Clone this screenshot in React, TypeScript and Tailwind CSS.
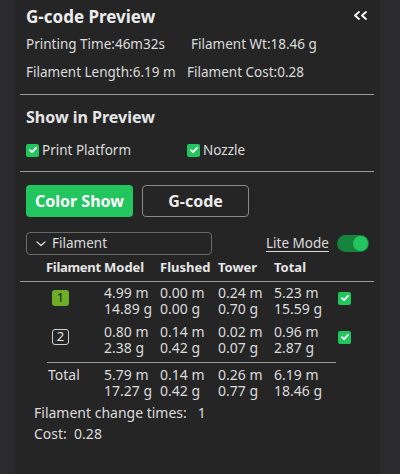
import React from 'react';

const font = { fontFamily: '"Noto Sans", "Open Sans", sans-serif' };

function Check({ className = '' }: { className?: string }) {
  return (
    <span className={`inline-flex w-[13px] h-[13px] rounded-[2px] bg-[#22c55e] items-center justify-center ${className}`}>
      <svg width="10" height="10" viewBox="0 0 10 10" fill="none">
        <path d="M2 5.2 L4.1 7.2 L8 2.8" stroke="white" strokeWidth="1.8" strokeLinecap="round" strokeLinejoin="round" />
      </svg>
    </span>
  );
}

function Cell({ lines }: { lines: string[] }) {
  return (
    <div className="flex flex-col">
      {lines.map((l) => (
        <span key={l} className="h-[16px] leading-[16px] whitespace-nowrap">{l}</span>
      ))}
    </div>
  );
}

const rows = [
  { id: '1', active: true, model: ['4.99 m', '14.89 g'], flushed: ['0.00 m', '0.00 g'], tower: ['0.24 m', '0.70 g'], total: ['5.23 m', '15.59 g'] },
  { id: '2', active: false, model: ['0.80 m', '2.38 g'], flushed: ['0.14 m', '0.42 g'], tower: ['0.02 m', '0.07 g'], total: ['0.96 m', '2.87 g'] },
];

export default function App() {
  return (
    <div className="w-[400px] h-[474px] bg-[#2b2b2d] flex overflow-hidden" style={font}>
      <div className="ml-[15px] w-[365px] h-full bg-[#252526] text-[#dcdcdc] text-[13.5px]">
        {/* header */}
        <div className="flex items-center justify-between pl-[11px] pr-[12px] pt-[7px] h-[27px]">
          <h1 className="text-[17px] font-bold text-[#ececec] leading-[20px]">G-code Preview</h1>
          <svg width="15" height="9" viewBox="0 0 15 9" fill="none" className="mb-[4px]">
            <path d="M6 1 L2 4.5 L6 8 M13 1 L9 4.5 L13 8" stroke="white" strokeWidth="1.8" strokeLinecap="round" strokeLinejoin="round" />
          </svg>
        </div>
        <div className="pl-[11px] mt-[3px]">
          <div className="flex items-center h-[28px]">
            <span className="w-[165px]">Printing Time:46m32s</span>
            <span>Filament Wt:18.46 g</span>
          </div>
          <div className="flex items-center h-[28px]">
            <span className="w-[161px]">Filament Length:6.19 m</span>
            <span>Filament Cost:0.28</span>
          </div>
        </div>
        <div className="ml-[5px] mr-[6px] mt-[8px] h-px bg-[#9a9a9a]" />

        {/* show in preview */}
        <div className="pl-[11px] mt-[12px] h-[20px] text-[16px] font-bold leading-[20px] text-[#e6e6e6]">Show in Preview</div>
        <div className="pl-[11px] mt-[13px] h-[20px] flex items-center">
          <div className="w-[161px] flex items-center gap-[3px]">
            <Check />
            <span>Print Platform</span>
          </div>
          <div className="flex items-center gap-[3px]">
            <Check />
            <span>Nozzle</span>
          </div>
        </div>
        <div className="ml-[5px] mr-[6px] mt-[11px] h-px bg-[#9a9a9a]" />

        {/* mode buttons */}
        <div className="pl-[11px] mt-[13px] flex gap-[9px]">
          <button className="w-[107px] h-[32px] rounded-[4px] bg-[#22c55e] text-white font-bold text-[16px]">Color Show</button>
          <button className="w-[107px] h-[32px] rounded-[4px] border border-[#8a8a8a] text-[#ececec] font-bold text-[16px]">G-code</button>
        </div>

        {/* filament selector */}
        <div className="pl-[11px] pr-[10px] mt-[15px] flex items-center">
          <div className="w-[186px] h-[23px] rounded-[4px] border border-[#6a6a6a] flex items-center pl-[9px] gap-[6px]">
            <svg width="10" height="6" viewBox="0 0 10 6" fill="none">
              <path d="M1 1 L5 4.5 L9 1" stroke="#dcdcdc" strokeWidth="1.3" strokeLinecap="round" strokeLinejoin="round" />
            </svg>
            <span>Filament</span>
          </div>
          <span className="ml-[54px] underline underline-offset-[3px] decoration-[#dcdcdc]">Lite Mode</span>
          <div className="ml-[8px] w-[32px] h-[17px] rounded-full bg-[#17843d] flex items-center justify-end pr-[1px]">
            <span className="w-[15px] h-[15px] rounded-full bg-[#22c55e]" />
          </div>
        </div>

        {/* table */}
        <div className="mt-[3px] pl-[31px] h-[20px] grid grid-cols-[58px_56px_58px_56px_64px] items-center font-bold text-[13px] text-[#e6e6e6]">
          <span className="tracking-[-0.3px]">Filament</span>
          <span>Model</span>
          <span>Flushed</span>
          <span>Tower</span>
          <span>Total</span>
        </div>
        <div className="ml-[5px] mr-[6px] mt-[3px] h-px bg-[#9a9a9a]" />

        <div className="mt-[3px] text-[14px]">
          {rows.map((r, i) => (
            <div key={r.id} className={`pl-[31px] grid grid-cols-[58px_56px_58px_56px_64px_auto] ${i > 0 ? 'mt-[7px]' : ''}`}>
              <div className="pl-[6px] pt-[1px]">
                <span
                  className={`inline-flex w-[17px] h-[16px] rounded-[3px] items-center justify-center text-[13px] leading-none ${
                    r.active ? 'bg-[#6aae2a] text-[#1d1d1d]' : 'border border-[#cfcfcf] text-[#e6e6e6]'
                  }`}
                >
                  {r.id}
                </span>
              </div>
              <Cell lines={r.model} />
              <Cell lines={r.flushed} />
              <Cell lines={r.tower} />
              <Cell lines={r.total} />
              <div className="pt-[2px]"><Check /></div>
            </div>
          ))}
        </div>
        <div className="ml-[32px] w-[289px] mt-[6px] h-px bg-[#9a9a9a]" />
        <div className="mt-[4px] pl-[31px] grid grid-cols-[58px_56px_58px_56px_64px] text-[14px]">
          <div className="pl-[2px] leading-[16px]">Total</div>
          <Cell lines={['5.79 m', '17.27 g']} />
          <Cell lines={['0.14 m', '0.42 g']} />
          <Cell lines={['0.26 m', '0.77 g']} />
          <Cell lines={['6.19 m', '18.46 g']} />
        </div>
        <div className="mt-[6px] pl-[19px] leading-[16px] text-[14px]">Filament change times:&nbsp;&nbsp; 1</div>
        <div className="mt-[5px] pl-[19px] leading-[16px] text-[14px]">Cost:&nbsp;&nbsp;0.28</div>
      </div>
    </div>
  );
}
